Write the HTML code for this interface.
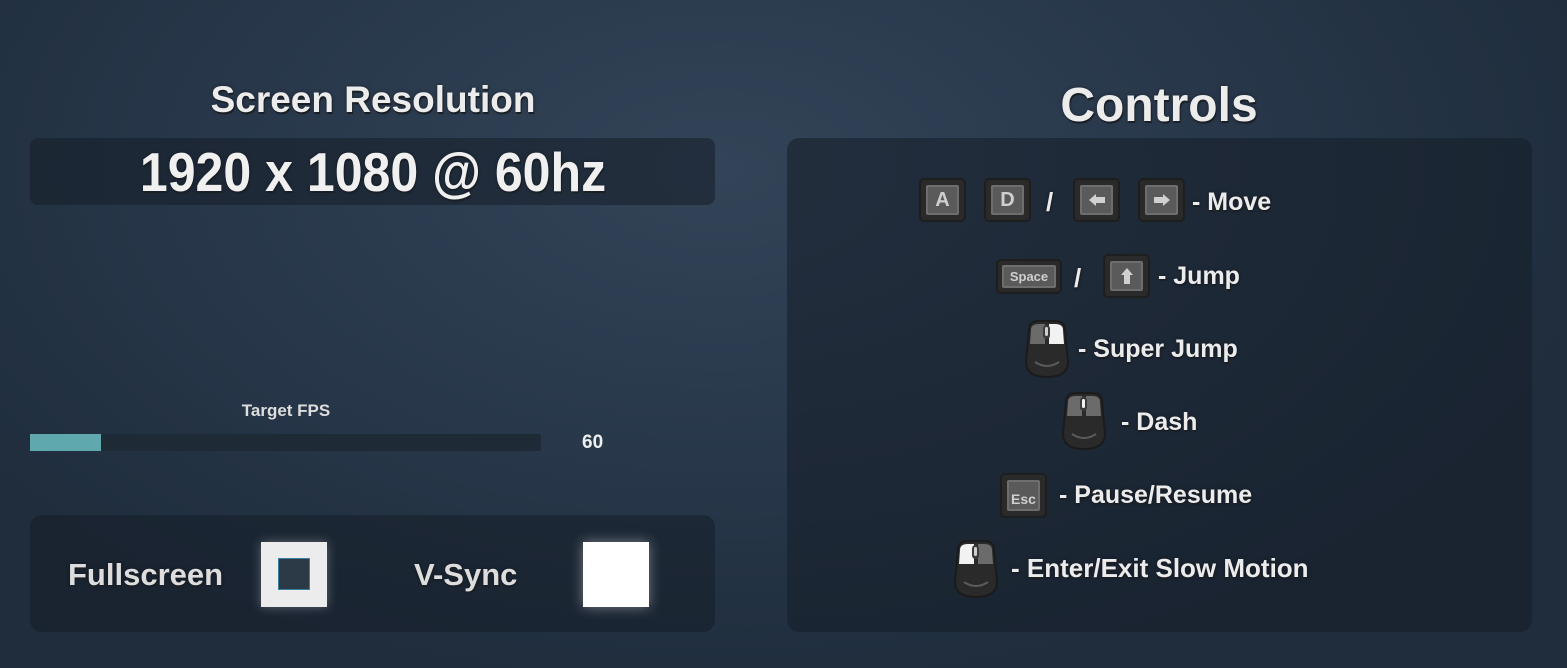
<!DOCTYPE html>
<html><head><meta charset="utf-8"><style>
*{margin:0;padding:0;box-sizing:border-box}
body{width:1567px;height:668px;overflow:hidden;position:relative;font-family:"Liberation Sans",sans-serif;font-weight:bold;color:#ececec;
background:radial-gradient(ellipse 900px 520px at 720px 170px,#334458 0%,#2a3a4d 45%,#1f2d3d 100%);}
.a{position:absolute;white-space:nowrap}
.sh{text-shadow:1px 2px 0 #1a1f26,0 0 4px rgba(0,0,0,.4)}
.panel{position:absolute;background:rgba(22,30,40,.55);border-radius:12px}
.c{transform:translateX(-50%);transform-origin:center}
.l{transform-origin:left center}
.key{position:absolute;background:#2a2a2a;border-radius:5px;border:2px solid #1e1e1e}
.key i{position:absolute;left:5px;top:5px;right:5px;bottom:5px;background:#5a5a5a;border:2px solid #6e6e6e;border-radius:2px;display:flex;align-items:center;justify-content:center;font-style:normal;color:#cfcfcf;font-size:20px}
.t{font-size:25px;line-height:24px}
</style></head><body>
<div class="a sh c" style="left:373px;top:78px;font-size:37px;line-height:44px">Screen Resolution</div>
<div class="panel" style="left:30px;top:138px;width:685px;height:67px;border-radius:8px"></div>
<div class="a sh" style="left:373px;top:142px;font-size:55px;line-height:60px;color:#f0f0f0;transform:translateX(-50%) scaleX(.91)">1920 x 1080 @ 60hz</div>

<div class="a sh c" style="left:1159px;top:78px;font-size:48px;line-height:56px">Controls</div>
<div class="panel" style="left:787px;top:138px;width:745px;height:494px"></div>

<div class="a c" style="left:286px;top:402px;font-size:17px;line-height:18px;color:#ddd">Target FPS</div>
<div class="a" style="left:30px;top:434px;width:511px;height:17px;background:#1e2a36;border-radius:2px"></div>
<div class="a" style="left:30px;top:434px;width:71px;height:17px;background:#5fa9ae"></div>
<div class="a" style="left:582px;top:433px;font-size:19px;line-height:20px;color:#eee">60</div>

<div class="panel" style="left:30px;top:515px;width:685px;height:117px"></div>
<div class="a sh" style="left:68px;top:558px;font-size:31px;line-height:34px;color:#ddd">Fullscreen</div>
<div class="a" style="left:261px;top:542px;width:66px;height:65px;background:#ececec;box-shadow:0 0 10px rgba(255,255,255,.3)"></div>
<div class="a" style="left:278px;top:558px;width:32px;height:32px;background:#2c3946;border:1px solid #3a7ea0"></div>
<div class="a sh" style="left:414px;top:558px;font-size:31px;line-height:34px;color:#ddd">V-Sync</div>
<div class="a" style="left:583px;top:542px;width:66px;height:65px;background:#fff;box-shadow:0 0 12px rgba(255,255,255,.4)"></div>

<div class="key" style="left:919px;top:178px;width:47px;height:44px"><i>A</i></div>
<div class="key" style="left:984px;top:178px;width:47px;height:44px"><i>D</i></div>
<div class="a sh" style="left:1046px;top:187px;font-size:26px">/</div>
<div class="key" style="left:1073px;top:178px;width:47px;height:44px"><i><svg width="18" height="14" viewBox="0 0 18 14"><path d="M1 7L8 1V4H17V10H8V13Z" fill="#d0d0d0"/></svg></i></div>
<div class="key" style="left:1138px;top:178px;width:47px;height:44px"><i><svg width="18" height="14" viewBox="0 0 18 14"><path d="M17 7L10 1V4H1V10H10V13Z" fill="#d0d0d0"/></svg></i></div>
<div class="a sh t" style="left:1192px;top:190px">- Move</div>
<div class="key" style="left:996px;top:259px;width:66px;height:35px"><i style="font-size:13px;left:4px;right:4px;top:4px;bottom:4px">Space</i></div>
<div class="a sh" style="left:1074px;top:263px;font-size:26px">/</div>
<div class="key" style="left:1103px;top:254px;width:47px;height:44px"><i><svg width="14" height="18" viewBox="0 0 14 18"><path d="M7 1L13 8H10V17H4V8H1Z" fill="#d0d0d0"/></svg></i></div>
<div class="a sh t" style="left:1158px;top:264px">- Jump</div>
<svg class="a" style="left:1025px;top:320px" width="44" height="59" viewBox="0 0 44 59"><path d="M4 10Q4 1 14 1H30Q40 1 40 10L43 42Q43 57 22 57Q1 57 1 42Z" fill="#2a2a2a" stroke="#1b1b1b" stroke-width="2"/><path d="M6 10Q6 4 14 4H20V24H5Z" fill="#6b6b6b"/><path d="M24 4H30Q38 4 38 10L39 24H24Z" fill="#f2f2f2"/><rect x="18" y="5" width="7" height="14" rx="3.5" fill="#3a3a3a"/><rect x="20" y="7" width="3" height="9" rx="1.5" fill="#cfcfcf"/><path d="M10 42Q22 50 34 42" stroke="#5a5a5a" stroke-width="2" fill="none"/></svg>
<div class="a sh t" style="left:1078px;top:337px">- Super Jump</div>
<svg class="a" style="left:1062px;top:392px" width="44" height="59" viewBox="0 0 44 59"><path d="M4 10Q4 1 14 1H30Q40 1 40 10L43 42Q43 57 22 57Q1 57 1 42Z" fill="#2a2a2a" stroke="#1b1b1b" stroke-width="2"/><path d="M6 10Q6 4 14 4H20V24H5Z" fill="#6b6b6b"/><path d="M24 4H30Q38 4 38 10L39 24H24Z" fill="#6b6b6b"/><rect x="18" y="5" width="7" height="14" rx="3.5" fill="#3a3a3a"/><rect x="20" y="7" width="3" height="9" rx="1.5" fill="#f2f2f2"/><path d="M10 42Q22 50 34 42" stroke="#5a5a5a" stroke-width="2" fill="none"/></svg>
<div class="a sh t" style="left:1121px;top:410px">- Dash</div>
<div class="key" style="left:1000px;top:473px;width:47px;height:45px"><i style="font-size:14px;align-items:flex-end;padding-bottom:2px">Esc</i></div>
<div class="a sh t" style="left:1059px;top:483px">- Pause/Resume</div>
<svg class="a" style="left:954px;top:540px" width="44" height="59" viewBox="0 0 44 59"><path d="M4 10Q4 1 14 1H30Q40 1 40 10L43 42Q43 57 22 57Q1 57 1 42Z" fill="#2a2a2a" stroke="#1b1b1b" stroke-width="2"/><path d="M6 10Q6 4 14 4H20V24H5Z" fill="#f2f2f2"/><path d="M24 4H30Q38 4 38 10L39 24H24Z" fill="#6b6b6b"/><rect x="18" y="5" width="7" height="14" rx="3.5" fill="#3a3a3a"/><rect x="20" y="7" width="3" height="9" rx="1.5" fill="#cfcfcf"/><path d="M10 42Q22 50 34 42" stroke="#5a5a5a" stroke-width="2" fill="none"/></svg>
<div class="a sh t" style="left:1011px;top:556px;font-size:26px">- Enter/Exit Slow Motion</div>
</body></html>
